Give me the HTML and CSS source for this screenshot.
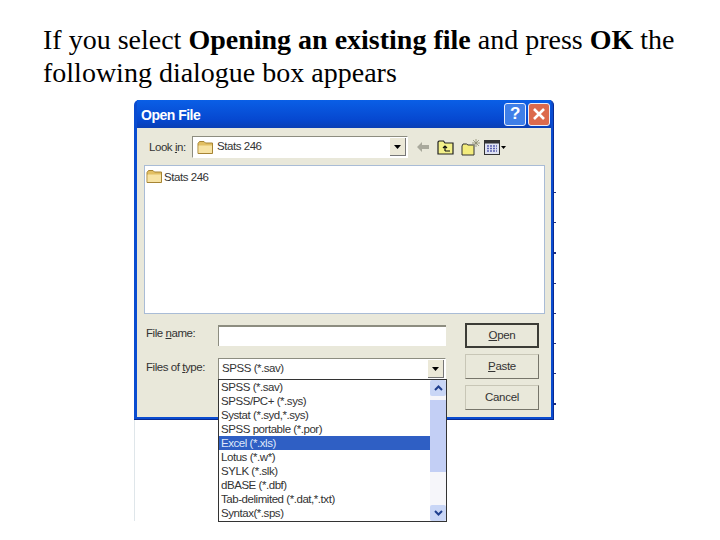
FILE: index.html
```html
<!DOCTYPE html>
<html lang="en">

<head>
    <meta charset="UTF-8">
    <title>Open File</title>
    <link rel="stylesheet" href="styles.css">
</head>

<body>
    <div class="slide">
        <p class="intro">If you select <b>Opening an existing file</b> and press <b>OK</b> the<br>following dialogue box appears</p>

        <div class="window">
            <div class="dialog">
                <div class="titlebar">
                    <span class="title">Open File</span>
                    <span class="capbtn help">?</span>
                    <span class="capbtn close">
                        <svg width="14" height="14" viewBox="0 0 14 14"><path d="M2 2L12 12M12 2L2 12" stroke="#fff" stroke-width="2.6"/></svg>
                    </span>
                </div>

                <div class="body">
                    <div class="toolbar">
                        <span class="label looklabel">Look <u>i</u>n:</span>
                        <div class="combo lookcombo">
                            <svg class="folder" width="17" height="15" viewBox="0 0 17 15"><path d="M1 3.5L2.5 1.5H7L8.500 3H15.500V13.500H1Z" fill="#e2bf62" stroke="#a68434"/><path d="M1.500 5.500H15V13H1.500Z" fill="#f7e3a4"/></svg>
                            <span class="combotext">Stats 246</span>
                            <span class="dropbtn"><svg width="7" height="4" viewBox="0 0 7 4"><path d="M0 0H7L3.5 4Z" fill="#000"/></svg></span>
                        </div>
                        <div class="tools">
                            <svg width="14" height="12" viewBox="0 0 14 12"><path d="M6 1L1 6L6 11V8H13V4H6Z" fill="#a9a99c"/></svg>
                            <svg width="17" height="16" viewBox="0 0 17 16"><path d="M1 3V15H16V4H8L6.500 2H2Z" fill="#f3f08a" stroke="#222" stroke-width="1.200"/><path d="M8 12H13M8 12V7M6 9L8 7L10 9" stroke="#111" stroke-width="1.200" fill="none"/></svg>
                            <svg width="20" height="17" viewBox="0 0 20 17"><path d="M1 7V16H13V6H7L5.500 5H2Z" fill="#f3ec7c" stroke="#333"/><path d="M15 0V8M11 4H19M12 1L18 7M18 1L12 7" stroke="#8a8a70" stroke-width=".8"/></svg>
                            <svg class="viewicon" width="23" height="15" viewBox="0 0 23 15"><rect x=".5" y=".5" width="15" height="14" fill="#dfe2f2" stroke="#333"/><rect x=".5" y=".5" width="15" height="3" fill="#333"/><path d="M3 6H13M3 8.500H13M3 11H13" stroke="#5a5fae" stroke-width="1.300" stroke-dasharray="2 1"/><path d="M17 6H22L19.500 9Z" fill="#000"/></svg>
                        </div>
                    </div>

                    <div class="filelist">
                        <div class="fileitem">
                            <svg width="17" height="15" viewBox="0 0 17 15"><path d="M1 3.500L2.500 1.500H7L8.500 3H15.500V13.500H1Z" fill="#e2bf62" stroke="#a68434"/><path d="M1.500 5.500H15V13H1.500Z" fill="#f7e3a4"/></svg>
                            <span>Stats 246</span>
                        </div>
                    </div>

                    <div class="form">
                        <div class="fields">
                            <div class="fieldrow namerow">
                                <span class="label">File <u>n</u>ame:</span>
                                <div class="input"></div>
                            </div>
                            <div class="fieldrow typerow">
                                <span class="label">Files of <u>t</u>ype:</span>
                                <div class="combo typecombo">
                                    <span class="combotext">SPSS (*.sav)</span>
                                    <span class="dropbtn"><svg width="7" height="4" viewBox="0 0 7 4"><path d="M0 0H7L3.5 4Z" fill="#000"/></svg></span>
                                </div>
                            </div>
                        </div>
                        <div class="buttons">
                            <button class="btn default"><u>O</u>pen</button>
                            <button class="btn"><u>P</u>aste</button>
                            <button class="btn">Cancel</button>
                        </div>
                    </div>
                </div>
            </div>

            <div class="dropdown">
                <ul class="options">
                    <li>SPSS (*.sav)</li>
                    <li>SPSS/PC+ (*.sys)</li>
                    <li>Systat (*.syd,*.sys)</li>
                    <li>SPSS portable (*.por)</li>
                    <li class="selected">Excel (*.xls)</li>
                    <li>Lotus (*.w*)</li>
                    <li>SYLK (*.slk)</li>
                    <li>dBASE (*.dbf)</li>
                    <li>Tab-delimited (*.dat,*.txt)</li>
                    <li>Syntax(*.sps)</li>
                </ul>
                <div class="scrollbar">
                    <span class="scrollbtn"><svg width="9" height="6" viewBox="0 0 9 6"><path d="M1 5L4.500 1.500L8 5" stroke="#1f3f8f" stroke-width="2" fill="none"/></svg></span>
                    <span class="thumb"></span>
                    <span class="scrollbtn"><svg width="9" height="6" viewBox="0 0 9 6"><path d="M1 1L4.500 4.500L8 1" stroke="#1f3f8f" stroke-width="2" fill="none"/></svg></span>
                </div>
            </div>
        </div>
    </div>
</body>

</html>
```

FILE: styles.css
```css
body {
    margin: 0;
    background: #fff;
    font-family: "Liberation Sans", Arial, sans-serif;
}
.slide {
    min-height: 540px;
    box-sizing: border-box;
    padding: 23px 0 0 43px;
}
.intro {
    margin: 0;
    font-family: "Liberation Serif", "Times New Roman", serif;
    font-size: 28px;
    line-height: 33px;
    color: #000;
    white-space: nowrap;
}

/* dialog */
.window {
    position: relative;
    width: 420px;
    margin: 11px 0 0 91px;
    font-size: 11.5px;
    letter-spacing: -.45px;
    color: #222;
    filter: blur(.35px);
}
/* faint edge left over under the window */
.window::before {
    content: "";
    position: absolute;
    left: 0;
    top: 320px;
    width: 1px;
    height: 101px;
    background: #dfe6ea;
}
/* small ticks down the right edge */
.window::after {
    content: "";
    position: absolute;
    left: 420px;
    top: 63px;
    width: 2px;
    height: 250px;
    background: repeating-linear-gradient(transparent 0, transparent 29px, #1c2f80 29px, #1c2f80 30.2px);
}
.dialog {
    height: 320px;
    box-sizing: border-box;
    background: #0a4cd0;
    border-right: 1px solid #0a2a90;
    border-bottom: 1px solid #0a2a90;
    padding: 0 2px 2px 3px;
    border-radius: 5px 5px 0 0;
}
.titlebar {
    display: flex;
    align-items: center;
    gap: 2px;
    height: 28px;
    padding: 0 1px 0 4px;
    background: linear-gradient(#0a5fe6, #0648d0 70%, #0a3fb4);
}
.title {
    flex: 1;
    padding-top: 2px;
    color: #fff;
    font-weight: bold;
    font-size: 14px;
    letter-spacing: -.5px;
}
.capbtn {
    display: flex;
    align-items: center;
    justify-content: center;
    width: 20px;
    height: 21px;
    border: 1px solid #e8eefc;
    border-radius: 3px;
    color: #fff;
    font-size: 17px;
    font-weight: bold;
}
.help {
    background: #3f7fe8;
}
.close {
    background: #dc6a4c;
}
.body {
    height: 289px;
    box-sizing: border-box;
    padding: 8px 6px 0 7px;
    background: #e9e8da;
}
.label {
    color: #333;
    white-space: nowrap;
}
.toolbar {
    display: flex;
    align-items: center;
    height: 22px;
}
.looklabel {
    width: 48px;
    padding-left: 5px;
    box-sizing: border-box;
}
.combo {
    display: flex;
    align-items: center;
    box-sizing: border-box;
    background: #fff;
    border: 1px solid #8d8d80;
    border-right-color: #fff;
    border-bottom-color: #fff;
}
.lookcombo {
    width: 216px;
    height: 22px;
    padding-left: 4px;
    gap: 3px;
}
.combotext {
    flex: 1;
    padding-bottom: 2px;
    color: #333;
}
.dropbtn {
    display: flex;
    align-items: center;
    justify-content: center;
    width: 16px;
    height: 18px;
    margin-right: 1px;
    background: #ece9d8;
    border-right: 1px solid #777;
    border-bottom: 1px solid #777;
    box-sizing: border-box;
}
.tools {
    display: flex;
    align-items: center;
    gap: 7px;
    margin-left: 8px;
}
.viewicon {
    margin-left: -4px;
}
.filelist {
    box-sizing: border-box;
    height: 149px;
    margin: 7px 0 0 0;
    background: #fff;
    border: 1px solid #a9bcd6;
    padding: 3px 1px;
}
.fileitem {
    display: flex;
    align-items: center;
    gap: 1px;
    color: #333;
}
.form {
    display: flex;
    justify-content: space-between;
    margin-top: 9px;
    padding-right: 6px;
}
.fields {
    display: flex;
    flex-direction: column;
    padding-top: 2px;
    gap: 12px;
}
.fieldrow {
    display: flex;
    align-items: center;
}
.fieldrow .label {
    width: 74px;
    padding-left: 2px;
    box-sizing: border-box;
}
.namerow .label {
    padding-bottom: 6px;
}
.typerow .label {
    padding-bottom: 4px;
}
.input {
    box-sizing: border-box;
    width: 228px;
    height: 21px;
    background: #fff;
    border-top: 2px solid #8d8d80;
    border-left: 1px solid #8d8d80;
}
.typecombo {
    width: 228px;
    height: 22px;
    padding-left: 3px;
}
.buttons {
    display: flex;
    flex-direction: column;
    gap: 6px;
}
.btn {
    box-sizing: border-box;
    width: 74px;
    height: 25px;
    padding: 0 0 2px;
    font-family: inherit;
    font-size: 11.5px;
    letter-spacing: -.3px;
    color: #333;
    background: #e9e8da;
    border: 1px solid #c8c6b6;
    border-right-color: #77756a;
    border-bottom-color: #77756a;
}
.default {
    border: 2px solid #3c3c36;
}

/* open list of the type combo, hangs over the window edge */
.dropdown {
    position: absolute;
    left: 84px;
    top: 279px;
    display: flex;
    width: 229px;
    height: 143px;
    box-sizing: border-box;
    background: #fff;
    border: 1px solid #333;
}
.options {
    flex: 1;
    margin: 0;
    padding: 0;
    list-style: none;
}
.options li {
    height: 14px;
    line-height: 14px;
    padding-left: 2px;
    color: #333;
    white-space: nowrap;
}
.options li.selected {
    background: #2f5fc4;
    color: #dfe7fa;
}
.scrollbar {
    display: flex;
    flex-direction: column;
    width: 16px;
    background: #f6f6fa;
}
.scrollbtn {
    display: flex;
    align-items: center;
    justify-content: center;
    height: 16px;
    background: #c9d6f6;
    border-radius: 2px;
}
.thumb {
    height: 72px;
    margin-top: 4px;
    margin-bottom: 33px;
    background: #c3cff5;
}
```
